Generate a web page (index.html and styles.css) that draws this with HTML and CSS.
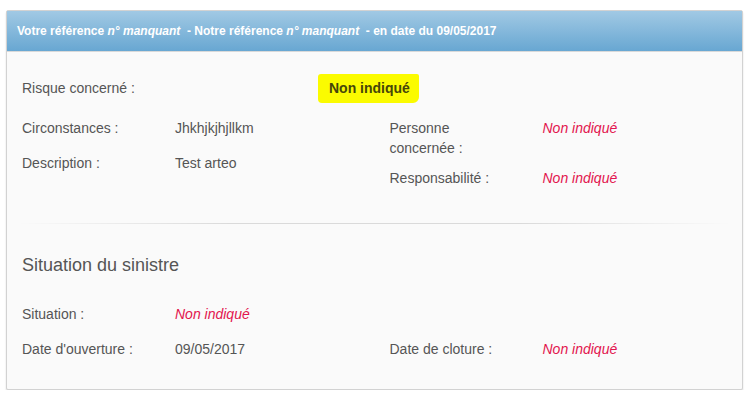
FILE: index.html
```html
<!DOCTYPE html>
<html lang="fr">
<head>
<meta charset="utf-8">
<title>Sinistre</title>
<link rel="stylesheet" href="styles.css">
</head>
<body>
<div class="page">
  <div class="panel">
    <div class="panel-heading">
      Votre référence <em>n° manquant</em>&nbsp; - Notre référence <em>n° manquant</em>&nbsp; - en date du 09/05/2017
    </div>
    <div class="panel-body">
      <div class="risk-row">
        <div class="label">Risque concerné :</div>
        <div class="value"><span class="highlight">Non indiqué</span></div>
      </div>
      <div class="cols top-cols">
        <div class="col">
          <div class="field field-left">
            <div class="label">Circonstances :</div>
            <div class="value">Jhkhjkjhjllkm</div>
          </div>
          <div class="field field-left">
            <div class="label">Description :</div>
            <div class="value">Test arteo</div>
          </div>
        </div>
        <div class="col">
          <div class="field field-right">
            <div class="label">Personne concernée :</div>
            <div class="value missing">Non indiqué</div>
          </div>
          <div class="field field-right">
            <div class="label">Responsabilité :</div>
            <div class="value missing">Non indiqué</div>
          </div>
        </div>
      </div>
      <hr class="divider">
      <h3 class="section-title">Situation du sinistre</h3>
      <div class="cols">
        <div class="col">
          <div class="field situation">
            <div class="label">Situation :</div>
            <div class="value missing">Non indiqué</div>
          </div>
        </div>
      </div>
      <div class="cols">
        <div class="col">
          <div class="field">
            <div class="label">Date d'ouverture :</div>
            <div class="value">09/05/2017</div>
          </div>
        </div>
        <div class="col">
          <div class="field">
            <div class="label">Date de cloture :</div>
            <div class="value missing">Non indiqué</div>
          </div>
        </div>
      </div>
    </div>
  </div>
</div>
</body>
</html>
```
FILE: styles.css
```css
html, body {
  margin: 0;
  padding: 0;
  background: #ffffff;
}

body {
  font-family: "Liberation Sans", Arial, sans-serif;
  font-size: 14px;
  line-height: 20px;
  color: #555555;
}

.page {
  padding: 10px 0 0 6px;
}

.panel {
  width: 735px;
  background: #fafafa;
  border: 1px solid #d2d2d2;
  border-radius: 2px;
  box-shadow: 0 2px 2px rgba(0, 0, 0, 0.14);
}

.panel-heading {
  height: 40px;
  line-height: 40px;
  padding: 0 10px;
  font-size: 12px;
  font-weight: bold;
  color: #ffffff;
  background: linear-gradient(to bottom, #a1c9e4 0%, #68a7d2 100%);
  border-bottom: 1px solid #d9d9d9;
  white-space: nowrap;
}

.panel-heading em {
  font-style: italic;
}

.panel-body {
  padding: 26px 15px 30px;
}

.risk-row {
  display: grid;
  grid-template-columns: 307px 1fr;
  margin-bottom: 20px;
}

.highlight {
  display: inline;
  background: #fbfb00;
  color: #46460a;
  font-weight: bold;
  padding: 6px 9px 7px 11px;
  margin-left: -11px;
  border-radius: 3px 2px 6px 4px;
}

.cols {
  display: grid;
  grid-template-columns: 1fr 1fr;
  column-gap: 30px;
}

.field {
  display: grid;
  grid-template-columns: 123px 1fr;
  column-gap: 30px;
}

.field-left {
  margin-bottom: 15px;
}

.field-right {
  margin-bottom: 10px;
}

.field-left:last-child,
.field-right:last-child {
  margin-bottom: 0;
}

.top-cols {
  margin-bottom: 35px;
}

.missing {
  color: #e2154e;
  font-style: italic;
}

.divider {
  height: 1px;
  border: 0;
  margin: 0 -4px;
  background: linear-gradient(to right, rgba(0, 0, 0, 0), rgba(0, 0, 0, 0.13) 30%, rgba(0, 0, 0, 0.13) 70%, rgba(0, 0, 0, 0));
}

.section-title {
  margin: 31px 0 29px;
  font-size: 18px;
  font-weight: normal;
  line-height: 20px;
  color: #555555;
}

.situation {
  margin-bottom: 15px;
}
```
